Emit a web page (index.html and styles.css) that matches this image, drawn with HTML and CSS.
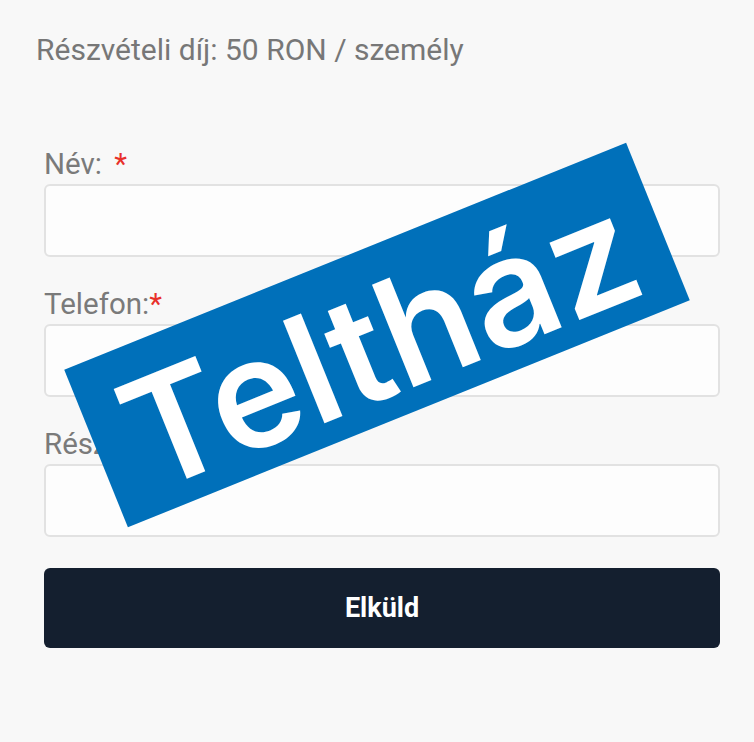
FILE: index.html
```html
<!DOCTYPE html>
<html lang="hu">
<head>
<meta charset="utf-8">
<link rel="stylesheet" href="styles.css">
</head>
<body>
<div class="page">
  <p class="fee">Részvételi díj: 50 RON / személy</p>
  <form class="form">
    <div class="field">
      <label class="label">Név: <span class="req req-spaced">*</span></label>
      <input class="input" type="text">
    </div>
    <div class="field">
      <label class="label">Telefon:<span class="req">*</span></label>
      <input class="input" type="text">
    </div>
    <div class="field">
      <label class="label">Résztvevők száma:<span class="req">*</span></label>
      <input class="input" type="text">
    </div>
    <button class="submit" type="button">Elküld</button>
  </form>
  <div class="stamp"><span class="stamp-text">Teltház</span></div>
</div>
</body>
</html>
```
FILE: styles.css
```css
html, body {
  margin: 0;
  padding: 0;
  background: #f8f8f8;
}
.page {
  position: relative;
  width: 754px;
  height: 742px;
  box-sizing: border-box;
  padding: 32px 34px 0 36px;
  font-family: Roboto, "Liberation Sans", sans-serif;
}
.fee {
  margin: 0;
  font-size: 30px;
  line-height: 36px;
  color: #777777;
}
.form {
  margin-top: 80px;
  padding-left: 8px;
  display: flex;
  flex-direction: column;
}
.field {
  display: flex;
  flex-direction: column;
  gap: 4px;
  margin-bottom: 31px;
}
.field:last-of-type {
  margin-bottom: 31px;
}
.label {
  font-size: 29.5px;
  line-height: 32px;
  color: #7a7a7a;
}
.req {
  color: #e8302a;
}
.req-spaced {
  margin-left: 5px;
}
.input {
  height: 73px;
  box-sizing: border-box;
  border: 2px solid #e2e2e2;
  border-radius: 6px;
  background: #fdfdfd;
  margin: 0;
}
.submit {
  height: 80px;
  border: none;
  border-radius: 6px;
  background: #141f2f;
  color: #ffffff;
  font-family: Roboto, "Liberation Sans", sans-serif;
  font-weight: 700;
  font-size: 27px;
}
.stamp {
  position: absolute;
  left: 74px;
  top: 250px;
  width: 606px;
  height: 170px;
  background: #0070ba;
  transform: rotate(-22deg);
  display: flex;
  align-items: center;
  justify-content: center;
}
.stamp-text {
  font-family: Inter, "Noto Sans", sans-serif;
  font-weight: 600;
  font-size: 152px;
  line-height: 1;
  color: #ffffff;
  padding-top: 14px;
}
```
